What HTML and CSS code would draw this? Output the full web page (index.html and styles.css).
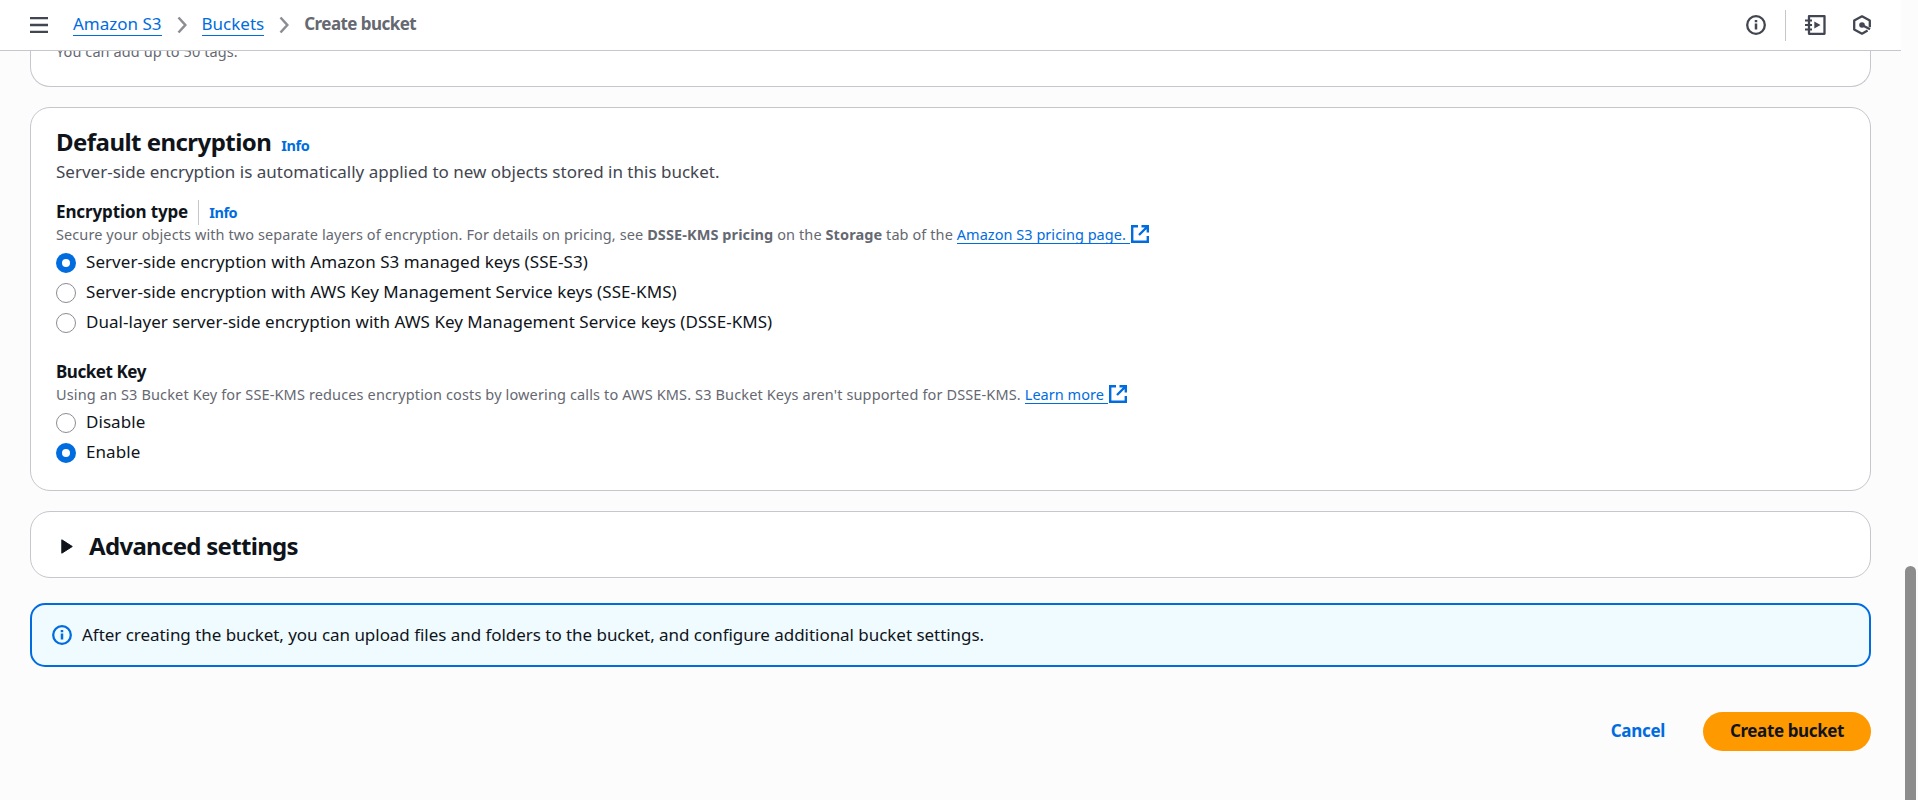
FILE: index.html
```html
<!DOCTYPE html>
<html lang="en">
<head>
<meta charset="utf-8">
<title>Create bucket</title>
<link rel="stylesheet" href="styles.css">
</head>
<body>
<header class="topbar">
  <svg class="menu" width="18" height="16" viewBox="0 0 18 16"><path d="M0 1.2h18M0 8h18M0 14.8h18" stroke="#424650" stroke-width="2.3"/></svg>
  <nav class="crumbs">
    <a>Amazon S3</a>
    <svg class="chev" width="10" height="18" viewBox="0 0 10 18"><path d="M1.5 1.5 8.3 9l-6.8 7.5" fill="none" stroke="#8c8c94" stroke-width="2.5"/></svg>
    <a>Buckets</a>
    <svg class="chev" width="10" height="18" viewBox="0 0 10 18"><path d="M1.5 1.5 8.3 9l-6.8 7.5" fill="none" stroke="#8c8c94" stroke-width="2.5"/></svg>
    <b>Create bucket</b>
  </nav>
  <div class="tools">
    <svg width="20" height="20" viewBox="0 0 20 20"><circle cx="10" cy="10" r="8.8" fill="none" stroke="#424650" stroke-width="2.3"/><path d="M10 8.6v6M10 5v2.3" stroke="#424650" stroke-width="2.5"/></svg>
    <i class="rule"></i>
    <svg class="book" width="21" height="20" viewBox="0 0 21 20"><path d="M4 1.2h15.5v17.6H4z" fill="none" stroke="#424650" stroke-width="2.3" stroke-linejoin="round"/><path d="M0 5.5h7M0 10h7M0 14.5h7" stroke="#424650" stroke-width="2"/><path d="M9.3 6.5v7l6.2-3.5z" fill="#424650"/></svg>
    <svg class="hex" width="18" height="20" viewBox="0 0 18 20"><path d="M16.8 12.2V5.6L9 1.3 1.2 5.6v8.8L9 18.7l5.6-3.1" fill="none" stroke="#424650" stroke-width="2.3" stroke-linejoin="round"/><circle cx="9" cy="10" r="2.8" fill="#424650"/><path d="M9 10l8 4.300" stroke="#424650" stroke-width="2.3"/></svg>
  </div>
</header>
<main class="page">
  <section class="card tags"><p class="hint">You can add up to 50 tags.</p></section>
  <section class="card encryption">
    <div class="heading"><h2>Default encryption</h2><a class="info">Info</a></div>
    <p class="desc">Server-side encryption is automatically applied to new objects stored in this bucket.</p>
    <div class="label"><b>Encryption type</b><i class="sep"></i><a class="info">Info</a></div>
    <p class="hint"><span>Secure your objects with two separate layers of encryption. For details on pricing, see <b>DSSE-KMS pricing</b> on the <b>Storage</b> tab of the </span><a class="link">Amazon S3 pricing page. </a><svg class="ext" width="18" height="18" viewBox="0 0 18 18"><path d="M7 1.2H1.2v15.6h15.6V11M10.5 1.2h6.3v6.3M16.5 1.5 8 10" fill="none" stroke="#006ce0" stroke-width="2.4"/></svg></p>
    <label class="radio"><i class="dot on"></i><span>Server-side encryption with Amazon S3 managed keys (SSE-S3)</span></label>
    <label class="radio"><i class="dot"></i><span>Server-side encryption with AWS Key Management Service keys (SSE-KMS)</span></label>
    <label class="radio"><i class="dot"></i><span class="plain">Dual-layer server-side encryption with AWS Key Management Service keys (DSSE-KMS)</span></label>
    <div class="label second"><b class="tight">Bucket Key</b></div>
    <p class="hint"><span class="wide">Using an S3 Bucket Key for SSE-KMS reduces encryption costs by lowering calls to AWS KMS. S3 Bucket Keys aren't supported for DSSE-KMS. </span><a class="link">Learn more </a><svg class="ext" width="18" height="18" viewBox="0 0 18 18"><path d="M7 1.2H1.2v15.6h15.6V11M10.5 1.2h6.3v6.3M16.5 1.5 8 10" fill="none" stroke="#006ce0" stroke-width="2.4"/></svg></p>
    <label class="radio"><i class="dot"></i><span>Disable</span></label>
    <label class="radio"><i class="dot on"></i><span>Enable</span></label>
  </section>
  <section class="card advanced">
    <svg width="12" height="15" viewBox="0 0 12 15"><path d="M.8.8v13.4L11.3 7.5z" fill="#0f141a" stroke="#0f141a" stroke-linejoin="round"/></svg>
    <h2>Advanced settings</h2>
  </section>
  <section class="alert">
    <svg width="20" height="20" viewBox="0 0 20 20"><circle cx="10" cy="10" r="8.8" fill="none" stroke="#006ce0" stroke-width="2.3"/><path d="M10 8.6v6M10 5v2.3" stroke="#006ce0" stroke-width="2.5"/></svg>
    <span>After creating the bucket, you can upload files and folders to the bucket, and configure additional bucket settings.</span>
  </section>
  <footer class="actions"><a class="cancel">Cancel</a><button class="create">Create bucket</button></footer>
</main>
<div class="scrollbar"></div>
</body>
</html>
```
FILE: styles.css
```css
* { box-sizing: border-box; }
body { margin: 0; height: 800px; overflow: hidden; background: #fcfcfd; color: #0f141a; font: 17px/24px "Noto Sans", sans-serif; font-stretch: 87.5%; white-space: nowrap; }
h2, p { margin: 0; }
svg { flex: none; display: block; }
a { color: #006ce0; }
.topbar { display: flex; align-items: center; width: 1901px; height: 51px; padding: 0 30px; background: #fff; border-bottom: 1px solid #c6c6cd; }
.crumbs { display: flex; align-items: center; margin-left: 25px; }
.crumbs a { border-bottom: 1px solid #006ce0; line-height: 22px; margin-top: -1px; }
.chev { margin: 0 15px; }
.crumbs b { color: #656871; margin-top: -2px; letter-spacing: -0.56px; }
.tools { display: flex; align-items: center; margin-left: auto; }
.rule { width: 1px; height: 31px; margin: 0 19px; background: #c6c6cd; }
.hex { margin-left: 27px; }
.page { width: 1901px; padding: 0 30px; }
.card { background: #fff; border: 1px solid #c6c6cd; border-radius: 20px; padding: 0 25px; }
.tags { height: 36px; border-top: 0; border-radius: 0 0 20px 20px; overflow: hidden; }
.tags .hint { margin-top: -10px; }
.encryption { height: 384px; margin-top: 20px; padding-top: 19px; }
.heading { display: flex; align-items: baseline; height: 31px; line-height: 30px; gap: 10px; }
h2 { font-size: 24px; line-height: 30px; font-weight: 700; letter-spacing: -0.54px; }
.info { font-size: 14.5px; font-weight: 700; letter-spacing: -0.4px; }
.desc { color: #424650; line-height: 27px; }
.label { display: flex; align-items: center; height: 24px; margin-top: 15px; letter-spacing: -0.12px; }
.label.second { margin-top: 22px; }
.label b, .label .info { margin-top: -1px; }
.label .tight { margin-top: 0; letter-spacing: -0.45px; }
.sep { width: 1px; height: 25px; margin: 0 10px; background: #c6c6cd; }
.hint { display: flex; align-items: center; height: 20px; color: #656871; font-size: 14.5px; line-height: 20px; letter-spacing: 0.09px; white-space: pre; }
.hint span { margin-top: -1px; }
.hint .wide { letter-spacing: 0.135px; }
.link { border-bottom: 1px solid #006ce0; line-height: 18px; letter-spacing: 0.03px; }
.ext { margin-left: 1px; }
.radio { display: flex; align-items: center; height: 30px; gap: 10px; letter-spacing: 0.06px; }
.plain { letter-spacing: 0.03px; }
.hint + .radio { margin-top: 4px; }
.radio span { margin-top: -2px; }
.dot { width: 20px; height: 20px; border: 1px solid #8c8c94; border-radius: 50%; background: #fff; }
.dot.on { border: 6px solid #006ce0; }
.advanced { display: flex; align-items: center; height: 67px; margin-top: 20px; padding-left: 30px; gap: 16px; }
.advanced svg { margin-top: 4px; }
.advanced h2 { margin-top: 2px; letter-spacing: -0.7px; }
.alert { display: flex; align-items: center; height: 64px; margin-top: 25px; padding: 0 20px; gap: 10px; border: 2px solid #006ce0; border-radius: 15px; background: #f0fbff; letter-spacing: -0.04px; }
.actions { display: flex; justify-content: flex-end; align-items: center; margin-top: 45px; }
.cancel { font-weight: 700; margin: -2px 38px 0 0; letter-spacing: -0.3px; }
.create { width: 168px; height: 39px; padding: 0 0 2px; border: 0; border-radius: 20px; background: #ff9900; color: #0f141a; font: inherit; font-stretch: 87.5%; font-weight: 700; letter-spacing: -0.38px; }
.scrollbar { position: absolute; left: 1905px; top: 566px; width: 11px; height: 250px; border-radius: 6px; background: #8c8c8c; }
```
